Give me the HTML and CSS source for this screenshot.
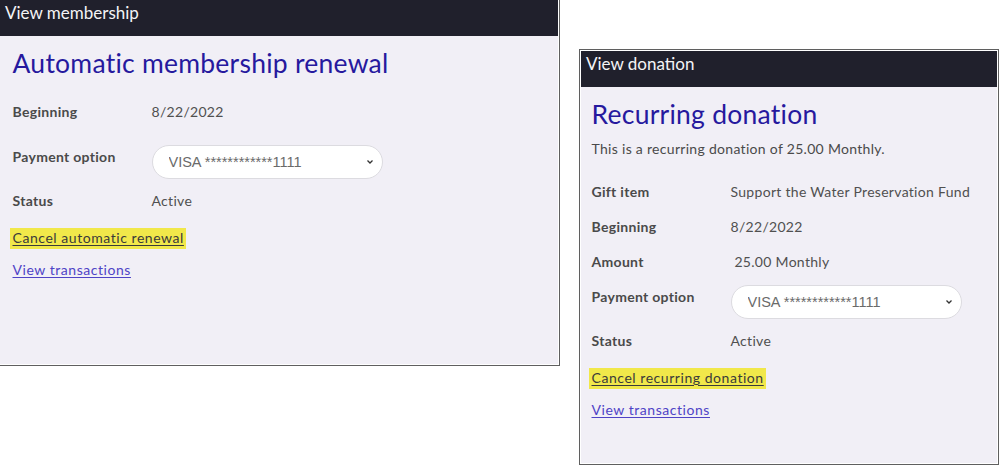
FILE: index.html
```html
<!DOCTYPE html>
<html lang="en">
<head>
<meta charset="utf-8">
<title>Membership and donation</title>
<link rel="stylesheet" href="styles.css">
</head>
<body>
<div class="board">
  <section class="panel panel-membership">
    <header class="panel-head">View membership</header>
    <div class="panel-body">
      <h1 class="title">Automatic membership renewal</h1>
      <div class="rows rows-membership">
        <div class="row"><span class="label">Beginning</span><span class="value">8/22/2022</span></div>
        <div class="row row-select row-gap"><span class="label">Payment option</span>
          <div class="select-wrap">
            <select class="select"><option>VISA ************1111</option></select>
            <svg class="chev" width="8" height="6" viewBox="0 0 8 6"><path d="M1.5 1.5 L4 4 L6.5 1.5" fill="none" stroke="#333" stroke-width="1.3"/></svg>
          </div>
        </div>
        <div class="row"><span class="label">Status</span><span class="value">Active</span></div>
      </div>
      <div class="links">
        <a class="link link-hl" href="#">Cancel automatic renewal</a>
        <a class="link" href="#">View transactions</a>
      </div>
    </div>
  </section>

  <section class="panel panel-donation">
    <header class="panel-head">View donation</header>
    <div class="panel-body">
      <h1 class="title">Recurring donation</h1>
      <p class="intro">This is a recurring donation of 25.00 Monthly.</p>
      <div class="rows">
        <div class="row"><span class="label">Gift item</span><span class="value">Support the Water Preservation Fund</span></div>
        <div class="row"><span class="label">Beginning</span><span class="value">8/22/2022</span></div>
        <div class="row"><span class="label">Amount</span><span class="value">&nbsp;25.00 Monthly</span></div>
        <div class="row row-select"><span class="label">Payment option</span>
          <div class="select-wrap">
            <select class="select"><option>VISA ************1111</option></select>
            <svg class="chev" width="8" height="6" viewBox="0 0 8 6"><path d="M1.5 1.5 L4 4 L6.5 1.5" fill="none" stroke="#333" stroke-width="1.3"/></svg>
          </div>
        </div>
        <div class="row"><span class="label">Status</span><span class="value">Active</span></div>
      </div>
      <div class="links">
        <a class="link link-hl" href="#">Cancel recurring donation</a>
        <a class="link" href="#">View transactions</a>
      </div>
    </div>
  </section>
</div>
</body>
</html>
```

FILE: styles.css
```css
* { box-sizing: border-box; }

html, body {
  margin: 0;
  background: #ffffff;
}

body {
  font-family: Lato, "Noto Sans", sans-serif;
  color: #444;
  width: 999px;
  height: 465px;
  overflow: hidden;
}

.board {
  display: flex;
  align-items: flex-start;
  gap: 19px;
}

.panel {
  border: 1.5px solid #5f5f5f;
  padding: 1px;
  background: #fff;
  display: flex;
  flex-direction: column;
}

.panel-membership {
  width: 562px;
  height: 368px;
  margin: -2px 0 0 -2px;
}

.panel-donation {
  width: 420px;
  height: 416px;
  margin-top: 49px;
}

.panel-head {
  background: #20202c;
  color: #f4f4f6;
  height: 36px;
  font-size: 17px;
  line-height: 20px;
  padding: 3px 0 0 5px;
  flex: none;
}

.panel-body {
  background: #f1eff6;
  flex: 1;
  padding: 0 0 0 12.5px;
}

.panel-donation .panel-body {
  padding-left: 10.5px;
}

.title {
  margin: 0;
  font-weight: 400;
  color: #26199e;
  font-size: 26.5px;
  line-height: 30px;
  padding-top: 12px;
  letter-spacing: 0.25px;
}

.intro {
  margin: 10px 0 0;
  font-size: 14px;
  line-height: 20px;
  color: #4a4a4a;
  letter-spacing: 0.3px;
}

.rows {
  margin-top: 23px;
}

.rows-membership {
  margin-top: 24px;
}

.row {
  display: flex;
  align-items: flex-start;
  height: 35px;
  font-size: 14px;
  line-height: 20px;
}

.row-gap {
  margin-top: 10px;
}

.row-select {
  height: 44px;
}

.label {
  width: 139px;
  flex: none;
  font-weight: 700;
  color: #4a4a4a;
  letter-spacing: 0.3px;
}

.value {
  color: #505050;
  letter-spacing: 0.3px;
}

.select-wrap {
  position: relative;
  width: 231px;
  height: 34px;
  margin-top: -2px;
}

.select {
  appearance: none;
  -webkit-appearance: none;
  width: 100%;
  height: 100%;
  border: 1px solid #dcdbe0;
  border-radius: 17px;
  background: #fff;
  font-family: "Liberation Sans", Arial, sans-serif;
  font-size: 14.5px;
  color: #6a6a6a;
  padding: 0 0 0 16px;
}

.chev {
  position: absolute;
  right: 9px;
  top: 14px;
  pointer-events: none;
}

.links {
  display: flex;
  flex-direction: column;
  align-items: flex-start;
  margin-top: 2px;
}

.link {
  font-size: 14px;
  line-height: 20px;
  color: #4f43c6;
  letter-spacing: 0.55px;
  text-decoration: underline;
  text-underline-offset: 2px;
}

.link-hl {
  background: #f1e84a;
  color: #3a3a3a;
  padding: 0 2px 1px 3px;
  margin-left: -3px;
  margin-bottom: 11px;
}
```
